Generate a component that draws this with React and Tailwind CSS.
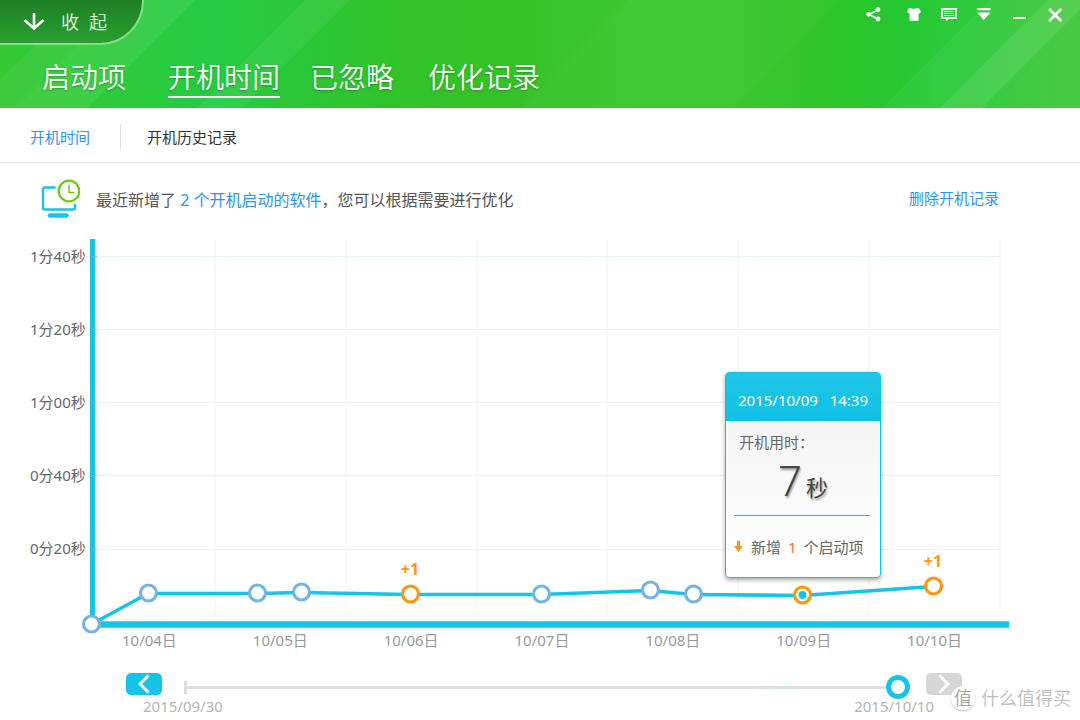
import React, { useState } from "react";

const PLOT_WIDTH = 925;
const pct = (x) => `${(x / PLOT_WIDTH) * 100}%`;

const tabs = [
  { label: "启动项", spacing: "" },
  { label: "开机时间", spacing: "ml-[42px]", active: true },
  { label: "已忽略", spacing: "ml-[30px]" },
  { label: "优化记录", spacing: "ml-[34px]" },
];

const timeLabels = ["1分40秒", "1分20秒", "1分00秒", "0分40秒", "0分20秒"];
const dayLabels = ["10/04日", "10/05日", "10/06日", "10/07日", "10/08日", "10/09日", "10/10日"];
const gridX = [131, 262, 393, 523, 654, 785, 916];
const gridY = [21, 94, 167, 240, 314];

const points = [
  { x: 7, y: 389 },
  { x: 64, y: 358 },
  { x: 173, y: 358 },
  { x: 217, y: 357 },
  { x: 326, y: 359, added: "+1" },
  { x: 457, y: 359 },
  { x: 566, y: 355 },
  { x: 609, y: 359 },
  { x: 718, y: 360, selected: true },
  { x: 849, y: 351, added: "+1" },
];

function Stripe({ from, to, opacity }) {
  return (
    <polygon
      points={`${from},0 ${to},0 ${to - 108},108 ${from - 108},108`}
      fill="#fff"
      fillOpacity={opacity}
    />
  );
}

function HeaderStripes() {
  return (
    <svg className="absolute inset-0 h-full w-full" aria-hidden="true">
      <Stripe from={80} to={123} opacity={0.05} />
      <Stripe from={123} to={195} opacity={0.08} />
      <Stripe from={305} to={350} opacity={0.06} />
      <Stripe from={628} to={840} opacity={0.025} />
      <Stripe from={990} to={1048} opacity={0.05} />
      <Stripe from={1048} to={1090} opacity={0.13} />
      <Stripe from={1090} to={1300} opacity={0.05} />
    </svg>
  );
}

function WindowButton({ label, className = "", children }) {
  return (
    <button
      type="button"
      aria-label={label}
      className={`flex h-[30px] w-[35px] items-center justify-center text-white ${className}`}
    >
      <svg width="16" height="16" viewBox="0 0 16 16" fill="currentColor" className="overflow-visible" aria-hidden="true">
        {children}
      </svg>
    </button>
  );
}

function WindowControls() {
  return (
    <div className="flex pr-2">
      <WindowButton label="分享" className="mr-[6px]">
        <path d="M12 3 3 7.500 12 12" fill="none" stroke="currentColor" strokeWidth="1.600" />
        <circle cx="12" cy="2.700" r="2.400" />
        <circle cx="2.700" cy="7.300" r="2.400" />
        <circle cx="12" cy="12" r="2.400" />
      </WindowButton>
      <WindowButton label="换肤">
        <path d="M4.200 1c.8 1.200 4.200 1.200 5 0l2.900.6L14 5l-2.400 2V13.800H2.600V7L0 5l1.600-3.400z" />
      </WindowButton>
      <WindowButton label="反馈">
        <path
          fillRule="evenodd"
          d="M-1 1h16v11H6.500l-2.500 2.500V12H-1zM1 3v7h12V3z"
        />
        <path d="M2 4h10v1H2zM2 6h10v1H2zM2 8h10v1H2z" />
      </WindowButton>
      <WindowButton label="菜单">
        <path d="M0 1h13.500v2.200H0zM0 5.500h13.500L6.750 13z" />
      </WindowButton>
      <WindowButton label="最小化">
        <path d="M1 10h13v2H1z" />
      </WindowButton>
      <WindowButton label="关闭">
        <path d="M2.200 2l12 12M14.200 2l-12 12" fill="none" stroke="currentColor" strokeWidth="2.600" />
      </WindowButton>
    </div>
  );
}

function Header() {
  return (
    <header className="relative h-[108px] overflow-hidden bg-[linear-gradient(90deg,#35c832_0%,#25cb42_20%,#32c22a_37%,#35c226_47%,#3cc630_58%,#3cc630_68%,#2fc428_77%,#25c832_84%,#2bca3a_88%,#3ec838_100%)]">
      <HeaderStripes />
      <div className="relative flex items-start justify-between">
        <button
          type="button"
          className="flex h-[45px] w-[144px] items-center rounded-br-[44px] border-r-2 border-b-2 border-[#86dd8c] bg-[linear-gradient(180deg,#1f8026_0%,#28a030_100%)] pl-[23px] text-white"
        >
          <svg width="22" height="18" viewBox="0 0 22 18" fill="none" stroke="currentColor" strokeWidth="2.600" aria-hidden="true">
            <path d="M11 0v15.500M1.500 7l9.500 8.500L20.500 7" />
          </svg>
          <span className="flex gap-[10px] pl-4 text-[18px] leading-6 font-[350] text-[#e2f4e2]">
            <span>收</span>
            <span>起</span>
          </span>
        </button>
        <WindowControls />
      </div>
      <nav className="relative flex pt-3 pl-[42px]">
        {tabs.map((tab) => (
          <a
            key={tab.label}
            href="#"
            aria-current={tab.active ? "page" : undefined}
            className={`h-[41px] border-b-2 text-[28px] leading-10 font-[350] text-white [text-shadow:0_1px_2px_rgba(0,80,0,0.4)] ${tab.spacing} ${
              tab.active ? "border-white" : "border-transparent"
            }`}
          >
            {tab.label}
          </a>
        ))}
      </nav>
    </header>
  );
}

function SubNav() {
  return (
    <nav className="flex h-[55px] items-center border-b border-[#e4e4e4] pt-1 pl-[30px] text-[15px] leading-5">
      <a href="#" aria-current="page" className="text-[#2b94ea]">
        开机时间
      </a>
      <span className="mr-[26px] ml-[30px] h-[26px] w-px bg-[#e2e2e2]" />
      <a href="#" className="text-[#333]">
        开机历史记录
      </a>
    </nav>
  );
}

function MonitorClockIcon() {
  return (
    <svg width="40" height="40" viewBox="0 0 40 40" fill="none" aria-hidden="true">
      <path
        d="M15.500 8.500H5Q3 8.500 3 10.500V28.500Q3 30.500 5 30.500H33Q35 30.500 35 28.500V25"
        stroke="#16c4e6"
        strokeWidth="2.400"
      />
      <path d="M10 36.500h16.500" stroke="#16c4e6" strokeWidth="4.600" strokeLinecap="round" />
      <circle cx="29" cy="12" r="10.300" stroke="#6bcb10" strokeWidth="2.300" fill="#fff" />
      <path d="M29 6v7.500h5.500" stroke="#6bcb10" strokeWidth="1.500" />
    </svg>
  );
}

function Summary() {
  return (
    <div className="flex h-[72px] items-center pr-[81px] pl-[40px]">
      <MonitorClockIcon />
      <p className="flex-1 pt-[2px] pl-4 text-[16px] leading-6 text-[#555]">
        最近新增了 <span className="text-[#2b94ea]">2 个开机启动的软件</span>，您可以根据需要进行优化
      </p>
      <a href="#" className="pb-[2px] text-[15px] leading-5 text-[#2b94ea]">
        删除开机记录
      </a>
    </div>
  );
}

function PointCard({ point }) {
  return (
    <div
      className="absolute top-[137px] w-[156px] -translate-x-1/2 overflow-hidden rounded-[4px] border border-[#16c0e0] bg-[linear-gradient(180deg,#f1f1f1_0%,#ffffff_100%)] px-2 text-[15px] leading-5 text-[#666] shadow-[0_2px_4px_rgba(0,0,0,0.35)]"
      style={{ left: pct(point.x + 1) }}
    >
      <div className="-mx-2 flex h-12 items-center justify-between bg-[linear-gradient(180deg,#1fc7e9_0%,#11bfe2_100%)] px-3 pt-[6px] text-[15px] text-white">
        <span>2015/10/09</span>
        <span>14:39</span>
      </div>
      <p className="pt-[11px] pl-[5px]">开机用时：</p>
      <p className="flex h-[63px] items-baseline justify-center text-[#444] [text-shadow:1px_2px_2px_rgba(0,0,0,0.35)]">
        <span className="text-[42px] leading-[56px] font-light">7</span>
        <span className="pl-1 text-[22px] leading-8">秒</span>
      </p>
      <hr className="mr-[2px] h-px border-0 bg-[#16b8da]" />
      <p className="flex h-[61px] items-center">
        <svg width="9" height="11" viewBox="0 0 9 11" className="mr-2" aria-hidden="true">
          <path d="M3 0h3v5h3L4.500 11 0 5h3z" fill="#ff9510" />
        </svg>
        新增
        <span className="px-[7px] text-[#ff7826]">1</span>
        个启动项
      </p>
    </div>
  );
}

function Plot() {
  const selected = points.find((p) => p.selected);
  return (
    <div className="relative">
      <svg className="block h-[395px] w-full overflow-visible" role="img" aria-label="开机时间">
        {gridX.map((x) => (
          <line key={x} x1={pct(x)} x2={pct(x)} y1="5" y2="380" stroke="#e8f3f9" />
        ))}
        {gridY.map((y) => (
          <line key={y} x1={pct(16)} x2={pct(916)} y1={y + 0.5} y2={y + 0.5} stroke="#e6f4fa" />
        ))}
        <rect x="6" y="4" width="5" height="385" fill="#16c4e6" />
        <line x1="6" x2="100%" y1="389.500" y2="389.500" stroke="#16c4e6" strokeWidth="6.400" />
        {gridY.map((y) => (
          <line key={y} x1="8" x2="13" y1={y + 0.5} y2={y + 0.5} stroke="#6fb4dd" />
        ))}
        {points.slice(1).map((p, i) => (
          <line
            key={p.x}
            x1={pct(points[i].x)}
            y1={points[i].y + 0.5}
            x2={pct(p.x)}
            y2={p.y + 0.5}
            stroke="#16c4e6"
            strokeWidth="3.600"
          />
        ))}
        {points.map((p) => (
          <circle
            key={p.x}
            cx={pct(p.x + 0.5)}
            cy={p.y}
            r="8"
            fill="#fff"
            stroke={p.added || p.selected ? "#ff9510" : "#74b4e4"}
            strokeWidth="3.200"
          />
        ))}
        <circle cx={pct(selected.x + 0.5)} cy={selected.y} r="4" fill="#16c4e6" />
        {points
          .filter((p) => p.added)
          .map((p) => (
            <text key={p.x} x={pct(p.x)} y={p.y - 19} textAnchor="middle" fill="#ff9510" fontSize="16" fontWeight="700">
              {p.added}
            </text>
          ))}
      </svg>
      <PointCard point={selected} />
    </div>
  );
}

function Chart() {
  return (
    <section className="flex pr-[71px] pl-[30px] text-[15px] leading-5">
      <ul className="flex w-[54px] flex-col gap-[53px] pt-[11px] whitespace-nowrap text-[#666]">
        {timeLabels.map((label) => (
          <li key={label}>{label}</li>
        ))}
      </ul>
      <div className="min-w-0 flex-1">
        <Plot />
        <ul className="grid grid-cols-7 pr-[9px] text-center text-[#999]">
          {dayLabels.map((label) => (
            <li key={label}>{label}</li>
          ))}
        </ul>
      </div>
    </section>
  );
}

function PageButton({ label, d, className }) {
  return (
    <button
      type="button"
      aria-label={label}
      className={`flex h-[22px] w-9 shrink-0 items-center justify-center rounded-[5px] ${className}`}
    >
      <svg width="12" height="20" viewBox="0 0 12 20" fill="none" stroke="#fff" strokeWidth="3" aria-hidden="true">
        <path d={d} />
      </svg>
    </button>
  );
}

function TimeRange() {
  const [value, setValue] = useState(100);
  return (
    <section className="pt-[23px]">
      <div className="flex h-[23px] items-start pr-[118px] pl-[126px]">
        <PageButton label="上一页" d="M10.500 1.500 2 10l8.500 8.500" className="bg-[#16c4e6]" />
        <div className="relative mt-[2px] mr-4 ml-[22px] flex flex-1 items-center">
          <span className="absolute left-0 h-[13px] w-[3px] bg-[#dcdcdc]" />
          <span className="absolute h-[3px] w-full bg-[#e0e0e0]" />
          <span className="absolute left-[80%] h-[3px] w-[6px] bg-[#b8ebf3]" />
          <span className="absolute left-[82.5%] h-[3px] w-[6px] bg-[#b8ebf3]" />
          <input
            type="range"
            aria-label="日期范围"
            min="0"
            max="100"
            value={value}
            onChange={(e) => setValue(Number(e.target.value))}
            className="relative h-6 w-full appearance-none bg-transparent [&::-webkit-slider-thumb]:h-6 [&::-webkit-slider-thumb]:w-6 [&::-webkit-slider-thumb]:appearance-none [&::-webkit-slider-thumb]:rounded-full [&::-webkit-slider-thumb]:border-[5px] [&::-webkit-slider-thumb]:border-solid [&::-webkit-slider-thumb]:border-[#16c4e6] [&::-webkit-slider-thumb]:bg-white"
          />
        </div>
        <PageButton label="下一页" d="M1.500 1.500 10 10l-8.500 8.500" className="bg-[#d6d6d6]" />
      </div>
      <div className="flex justify-between pr-[146px] pl-[143px] text-[15px] leading-5 text-[#b4b4b4]">
        <span>2015/09/30</span>
        <span>2015/10/10</span>
      </div>
    </section>
  );
}

function Watermark() {
  return (
    <div className="absolute right-[9px] bottom-[9px] flex items-center gap-[6px] text-[18px] leading-[26px] font-[350] text-[#bcbcbc] [text-shadow:0_0_2px_#fff]">
      <span className="flex h-6 w-6 items-center justify-center rounded-full bg-white/90 text-[18px] text-[#a4a4a4] shadow-[0_1px_2px_rgba(0,0,0,0.3)]">
        值
      </span>
      什么值得买
    </div>
  );
}

export default function App() {
  return (
    <div className="relative min-h-screen bg-white font-['Noto_Sans','Noto_Sans_CJK_SC',sans-serif]">
      <Header />
      <main>
        <SubNav />
        <Summary />
        <Chart />
        <TimeRange />
      </main>
      <Watermark />
    </div>
  );
}
